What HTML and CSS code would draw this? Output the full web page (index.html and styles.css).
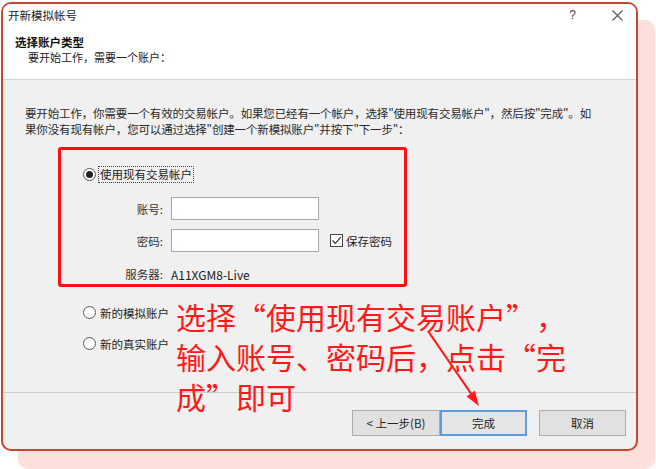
FILE: index.html
```html
<!DOCTYPE html>
<html lang="zh-CN">
<head>
<meta charset="utf-8">
<title>开新模拟帐号</title>
<link rel="stylesheet" href="styles.css">
</head>
<body>
<div class="stage">
  <div class="window">
    <div class="titlebar">
      <span class="title">开新模拟帐号</span>
      <span class="help">?</span>
      <svg class="close" width="11" height="11" viewBox="0 0 11 11"><path d="M0.5 0.5L10.5 10.5M10.5 0.5L0.5 10.5" stroke="#555" stroke-width="1.1" fill="none"/></svg>
    </div>
    <div class="header">
      <div class="h-title">选择账户类型</div>
      <div class="h-sub">要开始工作，需要一个账户：</div>
    </div>
    <div class="content">
      <p class="intro">要开始工作，你需要一个有效的交易帐户。如果您已经有一个帐户，选择"使用现有交易帐户"，然后按"完成"。如<br>果你没有现有帐户，您可以通过选择"创建一个新模拟账户"并按下"下一步"：</p>
      <div class="redbox">
        <div class="radio-row">
          <span class="radio checked"></span>
          <span class="focus">使用现有交易帐户</span>
        </div>
        <div class="fields">
          <span class="lbl">账号:</span>
          <span class="input"></span>
          <span></span>
          <span class="lbl">密码:</span>
          <span class="input"></span>
          <span class="check-row">
            <span class="checkbox"><svg width="11" height="11" viewBox="0 0 11 11"><path d="M1.5 5.5L4.3 8.3L9.8 2.2" stroke="#333" stroke-width="1.2" fill="none"/></svg></span>
            <span>保存密码</span>
          </span>
          <span class="lbl r3">服务器:</span>
          <span class="server r3">A11XGM8-Live</span>
          <span class="r3"></span>
        </div>
      </div>
      <div class="radio-row opt first">
        <span class="radio"></span>
        <span class="opt-label">新的模拟账户</span>
      </div>
      <div class="radio-row opt">
        <span class="radio"></span>
        <span class="opt-label">新的真实账户</span>
      </div>
    </div>
    <div class="footer">
      <button class="btn prev">&lt; 上一步(B)</button>
      <button class="btn primary">完成</button>
      <button class="btn cancel">取消</button>
    </div>
  </div>
  <div class="annotation">选择<span class="lq">“</span>使用现有交易账户<span class="rq">”</span>，<br>输入账号、密码后，点击<span class="lq">“</span>完<br>成<span class="rq">”</span>即可</div>
  <svg class="arrow" width="656" height="469" viewBox="0 0 656 469">
    <line x1="428" y1="331" x2="472" y2="395" stroke="#ff1a1a" stroke-width="2.2"/>
    <polygon points="479,406 466.5,396.5 474.8,390.8" fill="#ff1a1a"/>
  </svg>
</div>
</body>
</html>
```

FILE: styles.css
```css
* { box-sizing: border-box; }

html, body {
  margin: 0;
  padding: 0;
  background: #ffffff;
}

body {
  font-family: "Noto Sans CJK SC", "Noto Sans", sans-serif;
  font-size: 11.5px;
  color: #1e1e1e;
}

.stage {
  position: relative;
  width: 656px;
  height: 469px;
  overflow: hidden;
  padding: 2px 0 0 1px;
}

.window {
  width: 637px;
  height: 449px;
  border: 2px solid #c9472f;
  border-radius: 10px;
  background: #f0f0f0;
  box-shadow: 17px 18px 0 0 #fde0dc;
  display: flex;
  flex-direction: column;
  overflow: hidden;
}

.titlebar {
  height: 22px;
  background: #ffffff;
  display: flex;
  align-items: center;
  padding: 0 13px 0 5px;
  flex: none;
}

.title {
  font-size: 11.5px;
  color: #222;
}

.help {
  margin-left: auto;
  font-family: "Liberation Sans", sans-serif;
  font-size: 12px;
  color: #444;
  margin-right: 36px;
}

.close {
  display: block;
}

.header {
  height: 54px;
  background: #ffffff;
  border-bottom: 1px solid #d4d4d4;
  padding: 9px 0 0 12px;
  line-height: 15px;
  flex: none;
}

.h-title {
  font-weight: bold;
  font-size: 11.5px;
  color: #111;
}

.h-sub {
  padding-left: 13px;
  font-size: 11px;
  color: #222;
}

.content {
  flex: 1;
  padding: 25px 0 0 22px;
}

.intro {
  margin: 0;
  font-size: 11.5px;
  line-height: 16px;
  white-space: nowrap;
  letter-spacing: -0.15px;
  color: #2a2a2a;
}

.redbox {
  margin: 10px 0 0 33px;
  width: 349px;
  border: 3px solid #ff1010;
  border-radius: 3px;
  padding: 16px 0 1px 22px;
}

.radio-row {
  display: flex;
  align-items: center;
  height: 17px;
  gap: 2px;
}

.radio {
  width: 13px;
  height: 13px;
  border: 1px solid #555;
  border-radius: 50%;
  background: #fff;
  display: flex;
  align-items: center;
  justify-content: center;
  flex: none;
}

.radio.checked::after {
  content: "";
  width: 7px;
  height: 7px;
  border-radius: 50%;
  background: #222;
}

.focus {
  border: 1px dotted #444;
  padding: 0 1px;
  line-height: 15px;
}

.opt-label {
  padding-left: 2px;
}

.fields {
  margin: 14px 0 0 -22px;
  display: grid;
  grid-template-columns: 102px 148px auto;
  grid-template-rows: 23px 23px 22px;
  column-gap: 8px;
  row-gap: 9px;
  align-items: center;
}

.lbl {
  text-align: right;
  color: #333;
}

.input {
  height: 23px;
  background: #fff;
  border: 1px solid #a8a8a8;
  display: block;
}

.check-row {
  display: flex;
  align-items: center;
  gap: 3px;
  margin-left: 3px;
}

.checkbox {
  width: 13px;
  height: 13px;
  border: 1px solid #444;
  background: #fff;
  display: flex;
  align-items: center;
  justify-content: center;
}

.checkbox svg {
  display: block;
}

.r3 {
  align-self: end;
  line-height: 17px;
}

.server {
  font-size: 12px;
  color: #222;
}

.opt {
  margin-left: 58px;
  margin-top: 14px;
}

.opt.first {
  margin-top: 17px;
}

.footer {
  height: 57px;
  flex: none;
  border-top: 1px solid #cccccc;
  display: flex;
  justify-content: flex-end;
  align-items: flex-start;
  padding: 17px 10px 0 0;
}

.btn {
  height: 26px;
  width: 87px;
  background: #e1e1e1;
  border: 1px solid #adadad;
  font-family: "Noto Sans CJK SC", sans-serif;
  font-size: 11.5px;
  color: #222;
  padding: 0;
  margin: 0;
}

.btn.prev {
  width: 88px;
}

.btn.primary {
  border: 2px solid #5b9ee0;
  background: #e5e5e5;
}

.btn.cancel {
  margin-left: 12px;
}

.annotation {
  position: absolute;
  left: 176px;
  top: 296px;
  font-size: 30px;
  line-height: 40px;
  color: #ff1a1a;
  white-space: nowrap;
  font-family: "Noto Sans CJK SC", sans-serif;
}

.lq,
.rq {
  display: inline-block;
  width: 1em;
}

.lq {
  text-align: right;
}

.rq {
  text-align: left;
}

.arrow {
  position: absolute;
  left: 0;
  top: 0;
  pointer-events: none;
}
```
